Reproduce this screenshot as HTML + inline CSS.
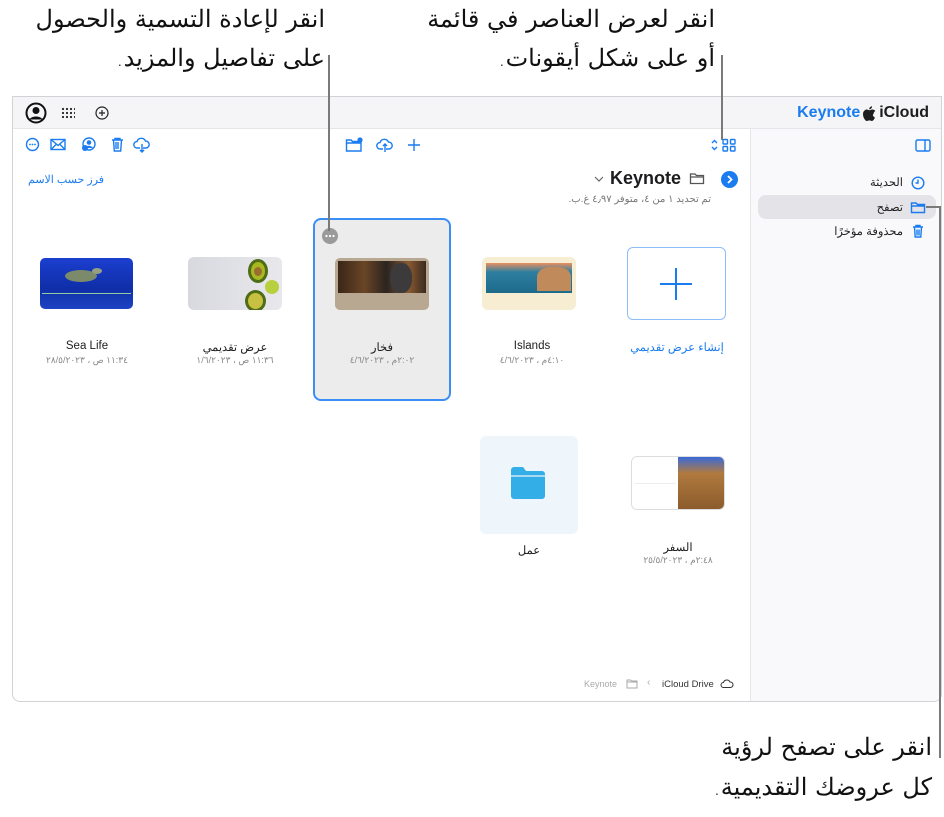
<!DOCTYPE html>
<html><head><meta charset="utf-8"><style>
*{margin:0;padding:0;box-sizing:border-box}
body{width:944px;height:817px;background:#fff;position:relative;overflow:hidden;font-family:"Liberation Sans","Noto Sans CJK SC",sans-serif;color:#1d1d1f}
.a{position:absolute}
.call{font-family:"DejaVu Sans","Noto Sans CJK SC",sans-serif;font-size:24px;color:#111;direction:rtl;text-align:right;white-space:nowrap;line-height:38px;font-weight:300;letter-spacing:-1px}
.vl{position:absolute;width:2px;background:#7a7a7a;z-index:5}
.win{left:12px;top:96px;width:930px;height:606px;border:1px solid #d2d2d7;border-radius:0 0 8px 8px;overflow:hidden;background:#fff}
.name{font-size:11.5px;color:#1d1d1f;text-align:center;width:130px;direction:rtl}
.date{font-size:9px;color:#888;text-align:center;width:130px;direction:rtl}
.ic{stroke:#1a7cf0;fill:none;stroke-width:1.4}
</style></head><body>

<div class="a call" style="right:619px;top:0px">انقر لإعادة التسمية والحصول</div>
<div class="a call" style="right:619px;top:39px">على تفاصيل والمزيد.</div>
<div class="a call" style="right:229px;top:0px">انقر لعرض العناصر في قائمة</div>
<div class="a call" style="right:229px;top:39px">أو على شكل أيقونات.</div>

<div class="a win">
 <div class="a" style="left:0;top:0;width:930px;height:32px;background:#f5f5f7;border-bottom:1px solid #e5e5ea"></div>
 <svg class="a" style="left:12px;top:5px" width="22" height="22" viewBox="0 0 22 22"><circle cx="11" cy="11" r="9.5" fill="none" stroke="#111" stroke-width="2"/><circle cx="11" cy="8.5" r="3.5" fill="#111"/><path d="M4.5 17.5c2-4 11-4 13 0" fill="#111"/></svg>
 <svg class="a" style="left:48px;top:9px" width="14" height="14"><g fill="#222"><circle cx="2" cy="3" r="1.1"/><circle cx="6" cy="3" r="1.1"/><circle cx="10" cy="3" r="1.1"/><circle cx="14" cy="3" r="1.1"/><circle cx="2" cy="7" r="1.1"/><circle cx="6" cy="7" r="1.1"/><circle cx="10" cy="7" r="1.1"/><circle cx="14" cy="7" r="1.1"/><circle cx="2" cy="11" r="1.1"/><circle cx="6" cy="11" r="1.1"/><circle cx="10" cy="11" r="1.1"/><circle cx="14" cy="11" r="1.1"/></g></svg>
 <svg class="a" style="left:82px;top:9px" width="14" height="14"><circle cx="7" cy="7" r="6" fill="none" stroke="#222" stroke-width="1.2"/><path d="M7 4v6M4 7h6" stroke="#222" stroke-width="1.2"/></svg>
 <div class="a" style="right:12px;top:7px;font-size:16px;font-weight:bold;white-space:nowrap;display:flex;align-items:center;gap:3px"><span style="color:#1a7cf0">Keynote</span><svg width="13" height="15" viewBox="0 0 13 15"><path d="M10.6 8c0-2 1.6-2.9 1.7-3-1-1.4-2.4-1.5-2.9-1.5-1.2-.1-2.4.7-3 .7s-1.6-.7-2.6-.7C2.400 3.500 0 4.800 0 8.200c0 1.100.2 2.200.6 3.200.6 1.500 2 3.700 3.300 3.600.8 0 1.400-.6 2.500-.6 1 0 1.500.6 2.500.6 1.300 0 2.500-2 3-3.500-2.500-1.100-2.300-3.400-1.300-3.500zM8.400 2.300C9.100 1.500 9 .6 9 .3c-.7 0-1.500.5-2 1-.5.5-.8 1.300-.7 2 .8.1 1.500-.4 2.100-1z" fill="#1d1d1f"/></svg><span>iCloud</span></div>

 <div class="a" style="left:737px;top:32px;width:193px;height:574px;background:#f9f9fb;border-left:1px solid #e5e5ea"></div>
 <svg class="a" style="left:902px;top:42px" width="16" height="13"><rect x="1" y="1" width="14" height="11" rx="1.5" class="ic"/><path d="M10 1v11" class="ic"/></svg>
 <div class="a" style="left:745px;top:98px;width:178px;height:24px;background:#e3e3e8;border-radius:8px"></div>
 <div class="a" style="right:38px;top:78px;font-size:11.5px;direction:rtl">الحديثة</div>
 <div class="a" style="right:38px;top:103px;font-size:11.5px;direction:rtl">تصفح</div>
 <div class="a" style="right:38px;top:127px;font-size:11.5px;direction:rtl">محذوفة مؤخرًا</div>
 <svg class="a" style="left:898px;top:79px" width="14" height="14"><circle cx="7" cy="7" r="5.8" class="ic"/><path d="M7 3.5V7H4.5" class="ic"/></svg>
 <svg class="a" style="left:897px;top:104px" width="16" height="13"><path d="M1.5 2h4.5l1.5 1.5h7v8h-13z M1.5 5h13" class="ic"/></svg>
 <svg class="a" style="left:899px;top:127px" width="12" height="14"><path d="M1 3h10M4 3V1.5h4V3M2.5 3l.7 10h5.6l.7-10M5 5.5v6M7 5.5v6" class="ic"/></svg>

 <svg class="a" style="left:12px;top:40px" width="140" height="16">
  <circle cx="7.5" cy="7.5" r="6" class="ic"/><g fill="#1a7cf0"><circle cx="5" cy="7.5" r=".9"/><circle cx="7.5" cy="7.5" r=".9"/><circle cx="10" cy="7.5" r=".9"/></g>
  <rect x="26" y="2.5" width="14" height="10" class="ic"/><path d="M26 2.5l7 6 7-6M26 12.5l5-5M40 12.5l-5-5" class="ic"/>
  <circle cx="64" cy="7" r="6" class="ic"/><circle cx="64" cy="5.5" r="2.3" fill="#1a7cf0"/><path d="M60 11c2-3 6-3 8 0" fill="#1a7cf0"/><circle cx="60" cy="11" r="3" fill="#1a7cf0"/>
  <path d="M87 3h11M90 3V1.5h5V3M88.5 3l.8 11h6.4l.8-11M91 5v7M93 5v7" class="ic"/>
  <path d="M115 11h-3a3.2 3.2 0 0 1 0-6.4 4.5 4.5 0 0 1 8.5-.5 3.4 3.4 0 0 1 .5 6.9h-3M117 7v8M115 13l2 2 2-2" class="ic"/>
 </svg>
 <svg class="a" style="left:332px;top:40px" width="80" height="16">
  <path d="M1.5 3h4.5l1.5 1.5h8.5v9.5h-14.5z M1.5 6h14.5" class="ic"/><circle cx="15" cy="3" r="2.6" fill="#1a7cf0"/>
  <path d="M38 12h-3a3.2 3.2 0 0 1 0-6.4 4.5 4.5 0 0 1 8.5-.5 3.4 3.4 0 0 1 .5 6.9h-3M40 15V7M38 9l2-2 2 2" class="ic"/>
  <path d="M69 2v12M63 8h12" class="ic" stroke-width="1.6"/>
 </svg>
 <svg class="a" style="left:697px;top:40px" width="30" height="16"><path d="M2 6l2.5-2.5L7 6M2 10l2.5 2.5L7 10" class="ic"/><rect x="13" y="2.5" width="4.5" height="4.5" rx=".8" class="ic"/><rect x="20.5" y="2.5" width="4.5" height="4.5" rx=".8" class="ic"/><rect x="13" y="9.5" width="4.5" height="4.5" rx=".8" class="ic"/><rect x="20.5" y="9.5" width="4.5" height="4.5" rx=".8" class="ic"/></svg>

 <div class="a" style="left:15px;top:76px;font-size:11px;color:#1a7cf0;direction:rtl">فرز حسب الاسم</div>
 <div class="a" style="left:708px;top:74px;width:17px;height:17px;border-radius:50%;background:#1a7cf0"></div>
 <svg class="a" style="left:708px;top:74px" width="17" height="17"><path d="M7 5l3.5 3.5L7 12" stroke="#fff" stroke-width="1.8" fill="none"/></svg>
 <svg class="a" style="left:676px;top:75px" width="16" height="13"><path d="M1.5 2h4.5l1.5 1.5h7v8h-13z M1.5 5h13" stroke="#555" stroke-width="1.3" fill="none"/></svg>
 <div class="a" style="left:597px;top:71px;font-size:18px;font-weight:bold;color:#1d1d1f">Keynote</div>
 <svg class="a" style="left:581px;top:78px" width="10" height="8"><path d="M1 2l4 4 4-4" stroke="#666" stroke-width="1.2" fill="none"/></svg>
 <div class="a" style="right:230px;top:97px;font-size:10px;color:#777;direction:rtl">تم تحديد ١ من ٤، متوفر ٤٫٩٧ غ.ب.</div>

 <div class="a" style="left:300px;top:121px;width:138px;height:183px;background:#ececec;border:2px solid #3a8ef6;border-radius:8px"></div>
 <div class="a" style="left:309px;top:131px;width:16px;height:16px;border-radius:50%;background:#9a9a9a"></div>
 <svg class="a" style="left:309px;top:131px" width="16" height="16"><g fill="#fff"><circle cx="4.5" cy="8" r="1.1"/><circle cx="8" cy="8" r="1.1"/><circle cx="11.5" cy="8" r="1.1"/></g></svg>

 <div class="a" style="left:27px;top:161px;width:93px;height:51px;border-radius:5px;background:linear-gradient(180deg,#1b3fd0,#0f2ea8 60%,#1d44c4);overflow:hidden">
  <div class="a" style="left:2px;top:35px;width:89px;height:1px;background:#8fd0a0"></div>
  <div class="a" style="left:25px;top:12px;width:32px;height:12px;border-radius:50%;background:#7a8a6a"></div>
  <div class="a" style="left:52px;top:10px;width:10px;height:6px;border-radius:50%;background:#96a080"></div>
 </div>
 <div class="a" style="left:175px;top:160px;width:94px;height:53px;border-radius:6px;background:linear-gradient(90deg,#d8d9df,#e8e8ec);overflow:hidden">
  <div class="a" style="left:60px;top:2px;width:20px;height:24px;border-radius:50%;background:#a8b820;border:3px solid #4e6d16"></div>
  <div class="a" style="left:66px;top:10px;width:8px;height:9px;border-radius:50%;background:#9a6c30"></div>
  <div class="a" style="left:77px;top:23px;width:14px;height:14px;border-radius:50%;background:#b8cf40"></div>
  <div class="a" style="left:57px;top:33px;width:21px;height:22px;border-radius:50%;background:#c8c040;border:3px solid #4e6d16"></div>
 </div>
 <div class="a" style="left:322px;top:161px;width:94px;height:52px;border-radius:5px;background:#b9a891;overflow:hidden">
  <div class="a" style="left:3px;top:3px;width:88px;height:32px;background:linear-gradient(90deg,#3a2618,#6a4526 30%,#2a2420 55%,#8a5a30 80%,#3a2a20)"></div>
  <div class="a" style="left:55px;top:5px;width:22px;height:30px;border-radius:45%;background:#3c3a3a"></div>
 </div>
 <div class="a" style="left:469px;top:160px;width:94px;height:53px;border-radius:6px;background:#f6edd2;overflow:hidden">
  <div class="a" style="left:4px;top:6px;width:86px;height:30px;background:linear-gradient(180deg,#e89060 0%,#2d7fa0 30%,#1e6a8a 100%)"></div>
  <div class="a" style="left:55px;top:10px;width:34px;height:24px;border-radius:40% 40% 0 0;background:#c08a5a"></div>
 </div>
 <div class="a" style="left:614px;top:150px;width:99px;height:73px;border:1.5px solid #8dbdf8;border-radius:6px;background:#fff"></div>
 <svg class="a" style="left:646px;top:170px" width="34" height="34"><path d="M17 1v32M1 17h32" stroke="#1a7cf0" stroke-width="2"/></svg>

 <div class="a name" style="left:9px;top:243px">Sea Life</div><div class="a date" style="left:9px;top:258px">١١:٣٤ ص ، ٢٨/٥/٢٠٢٣</div>
 <div class="a name" style="left:157px;top:243px">عرض تقديمي</div><div class="a date" style="left:157px;top:258px">١١:٣٦ ص ، ١/٦/٢٠٢٣</div>
 <div class="a name" style="left:304px;top:243px">فخار</div><div class="a date" style="left:304px;top:258px">٢:٠٢م ، ٤/٦/٢٠٢٣</div>
 <div class="a name" style="left:454px;top:243px">Islands</div><div class="a date" style="left:454px;top:258px">٤:١٠م ، ٤/٦/٢٠٢٣</div>
 <div class="a name" style="left:599px;top:243px;color:#1a7cf0">إنشاء عرض تقديمي</div>

 <div class="a" style="left:467px;top:339px;width:98px;height:98px;border-radius:6px;background:#eef6fb"></div>
 <svg class="a" style="left:497px;top:369px" width="36" height="34"><path d="M1 4a3 3 0 0 1 3-3h9l3 4h16a3 3 0 0 1 3 3v22a3 3 0 0 1-3 3H4a3 3 0 0 1-3-3z" fill="#33aee6"/><path d="M1 10h34" stroke="#eef6fb" stroke-width="1.2"/></svg>
 <div class="a" style="left:618px;top:359px;width:94px;height:54px;border-radius:6px;border:1px solid #ddd;background:#fff;overflow:hidden">
  <div class="a" style="left:46px;top:0;width:48px;height:54px;background:linear-gradient(180deg,#3a6ad8 0%,#b07a40 30%,#8a5a2a 100%)"></div>
  <div class="a" style="left:2px;top:26px;width:42px;height:1px;background:#eee"></div>
 </div>
 <div class="a name" style="left:451px;top:446px">عمل</div>
 <div class="a name" style="left:600px;top:443px">السفر</div><div class="a date" style="left:600px;top:458px">٢:٤٨م ، ٢٥/٥/٢٠٢٣</div>

 <div class="a" style="left:571px;top:582px;font-size:9px;color:#aaa">Keynote</div>
 <svg class="a" style="left:613px;top:582px" width="12" height="10"><path d="M1 1h3.5l1 1H11v7H1zM1 3h10" stroke="#aaa" fill="none"/></svg>
 <div class="a" style="left:634px;top:580px;font-size:10px;color:#aaa">&lsaquo;</div>
 <div class="a" style="left:649px;top:582px;font-size:9.5px;color:#333">iCloud Drive</div>
 <svg class="a" style="left:707px;top:582px" width="14" height="10"><path d="M3.5 8.5a2.5 2.5 0 0 1 0-5 3.5 3.5 0 0 1 6.5-.5 2.7 2.7 0 0 1 .5 5.5z" stroke="#333" fill="none"/></svg>
</div>

<div class="vl" style="left:328px;top:55px;height:176px"></div>
<div class="vl" style="left:721px;top:55px;height:85px"></div>
<div class="vl" style="left:939px;top:206px;height:552px"></div>
<div class="a" style="left:926px;top:206px;width:14px;height:2px;background:#7a7a7a;z-index:5"></div>
<div class="a call" style="right:12px;top:728px">انقر على تصفح لرؤية</div>
<div class="a call" style="right:12px;top:768px">كل عروضك التقديمية.</div>
</body></html>
